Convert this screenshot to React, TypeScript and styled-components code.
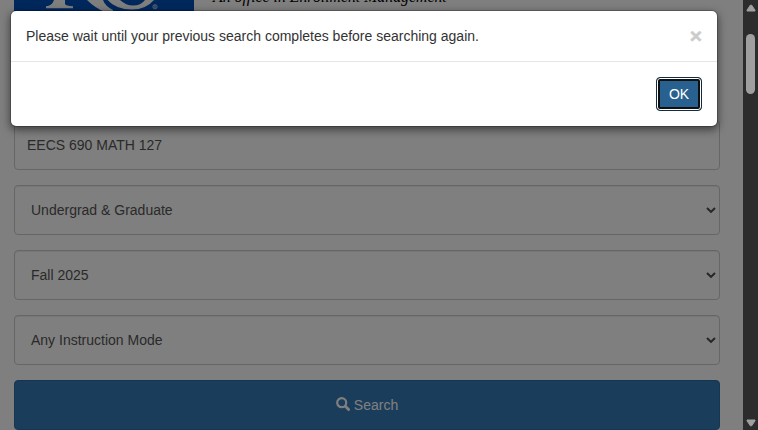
import React from "react";
import styled, { createGlobalStyle } from "styled-components";

const GlobalStyle = createGlobalStyle`
  * { box-sizing: border-box; }
  html, body { margin: 0; height: 430px; overflow: hidden; }
  body { font: 14px/20px "Liberation Sans", Arial, sans-serif; color: #333; background: #fff; }
`;

const Screen = styled.div`
  display: flex;
  width: 758px;
  height: 430px;
  overflow: hidden;
  position: relative;
`;

const Page = styled.main`
  width: 743px;
  height: 430px;
  padding: 0 23px 0 14px;
  overflow: hidden;
  display: flex;
  flex-direction: column;
  gap: 15px;
`;

const Header = styled.header`
  height: 105px;
  flex: none;
  display: flex;
  gap: 19px;
`;

const Logo = styled.div`
  width: 180px;
  height: 80px;
  background: #0051ba;
`;

const Tagline = styled.div`
  margin-top: -13px;
  font: italic 15.8px/20px "Liberation Serif", serif;
  color: #000;
  white-space: nowrap;
`;

const Field = styled.div<{ $inset: number }>`
  height: 50px;
  flex: none;
  display: flex;
  align-items: center;
  justify-content: space-between;
  padding: 0 3px 0 ${(p) => p.$inset}px;
  border: 1px solid #ccc;
  border-radius: 4px;
  box-shadow: inset 0 1px 1px rgba(0, 0, 0, 0.075);
  color: #555;
`;

const SearchButton = styled.button`
  height: 50px;
  flex: none;
  display: flex;
  align-items: center;
  justify-content: center;
  gap: 4px;
  border: 1px solid #2e6da4;
  border-radius: 4px;
  background: #337ab7;
  color: #fff;
  font: inherit;

  svg { margin-top: -2px; }
`;

const Backdrop = styled.div`
  position: absolute;
  inset: 0 15px 0 0;
  background: rgba(0, 0, 0, 0.5);
`;

const Dialog = styled.section`
  position: absolute;
  left: 10px;
  top: 10px;
  width: 708px;
  height: 117px;
  border: 1px solid rgba(0, 0, 0, 0.2);
  border-radius: 6px;
  background: #fff;
  background-clip: padding-box;
  box-shadow: 0 3px 9px rgba(0, 0, 0, 0.5);
`;

const DialogBody = styled.div`
  height: 51px;
  padding: 15px;
  display: flex;
  justify-content: space-between;
  border-bottom: 1px solid #e5e5e5;
`;

const Close = styled.button`
  height: 21px;
  margin-top: -1px;
  padding: 0;
  border: 0;
  background: none;
  font: bold 21px/21px "Liberation Sans", Arial, sans-serif;
  color: #000;
  opacity: 0.2;
  -webkit-text-stroke: 0.6px #000;
`;

const DialogFooter = styled.div`
  display: flex;
  justify-content: flex-end;
  padding: 15px;
`;

const OkButton = styled.button`
  width: 46px;
  height: 34px;
  padding: 0;
  border: 1px solid #122b40;
  border-radius: 4px;
  background: #286090;
  color: #fff;
  font: inherit;
  box-shadow: inset 0 0 0 1px #fff, inset 0 0 0 3px #101010;
`;

const Scrollbar = styled.aside`
  width: 15px;
  height: 430px;
  background: #2c2c2c;
  display: flex;
  flex-direction: column;
  align-items: center;
  justify-content: space-between;
  padding: 4px 0 3px;
`;

const Thumb = styled.div`
  width: 9px;
  height: 60px;
  margin: 22px 0 auto;
  border-radius: 5px;
  background: #9f9f9f;
`;

const Chevron = () => (
  <svg width="10" height="7" viewBox="0 0 10 7">
    <path d="M1 1 5 4.9 9 1" fill="none" stroke="#4c4c4c" strokeWidth="2.1" />
  </svg>
);

const Select = ({ label }: { label: string }) => (
  <Field $inset={16}>
    <span>{label}</span>
    <Chevron />
  </Field>
);

export default function App() {
  return (
    <>
      <GlobalStyle />
      <Screen>
        <Page>
          <Header>
            <Logo>
              <svg width="180" height="20" viewBox="0 0 180 20" fill="#fff">
                <path d="M40 0H51V4Q52 6 59 6.3V8.3H32V6.3Q38 6 40 0ZM73 0H89Q91 6 99 10V12H91Q81 8 73 0ZM93.5 0H106Q112 5.5 119 5.5Q127 5.5 131 0H140Q132 9.5 118 9.5Q102 9.5 93.5 0Z" />
                <circle cx="141" cy="6.8" r="2.1" fill="none" stroke="#fff" strokeWidth=".7" />
                <path d="M140.3 8V5.7H141.2Q142.2 6.3 141.2 6.9L142 8" fill="none" stroke="#fff" strokeWidth=".5" />
              </svg>
            </Logo>
            <Tagline>An office in Enrollment Management</Tagline>
          </Header>
          <Field $inset={12}>EECS 690 MATH 127</Field>
          <Select label="Undergrad & Graduate" />
          <Select label="Fall 2025" />
          <Select label="Any Instruction Mode" />
          <SearchButton>
            <svg width="14" height="14" viewBox="0 0 14 14" fill="none" stroke="#fff">
              <circle cx="5.7" cy="5.7" r="4.5" strokeWidth="2.2" />
              <path d="m9.3 9.3 3.3 3.3" strokeWidth="2.8" strokeLinecap="round" />
            </svg>
            <span>Search</span>
          </SearchButton>
        </Page>
        <Scrollbar>
          <svg width="10" height="8" viewBox="0 0 10 8">
            <path d="M4.3 1.2H5.7L9 6.2V7H1V6.2Z" fill="#9f9f9f" stroke="#9f9f9f" strokeLinejoin="round" />
          </svg>
          <Thumb />
          <svg width="10" height="8" viewBox="0 0 10 8">
            <path d="M4.3 6.8H5.7L9 1.8V1H1V1.8Z" fill="#9f9f9f" stroke="#9f9f9f" strokeLinejoin="round" />
          </svg>
        </Scrollbar>
        <Backdrop />
        <Dialog role="dialog">
          <DialogBody>
            <span>Please wait until your previous search completes before searching again.</span>
            <Close>×</Close>
          </DialogBody>
          <DialogFooter>
            <OkButton>OK</OkButton>
          </DialogFooter>
        </Dialog>
      </Screen>
    </>
  );
}
